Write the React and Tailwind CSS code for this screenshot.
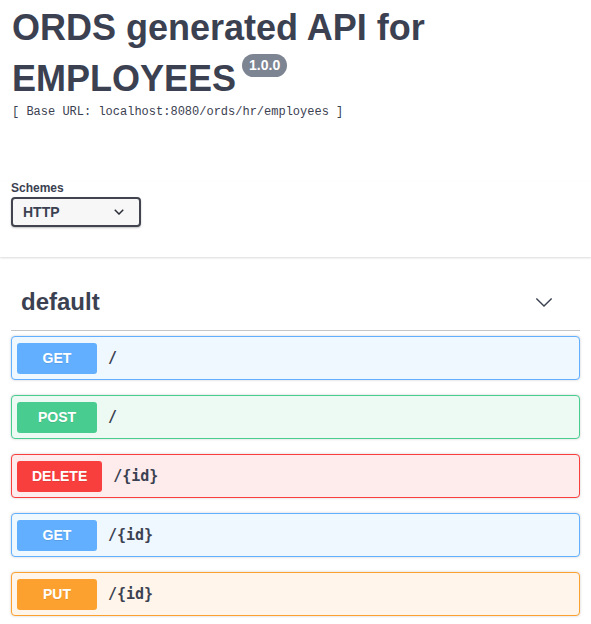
import React from "react";

const ops = [
  { method: "GET", path: "/", badge: "bg-[#61affe]", block: "bg-[#eff7ff] border-[#61affe]" },
  { method: "POST", path: "/", badge: "bg-[#49cc90]", block: "bg-[#edfaf4] border-[#49cc90]" },
  { method: "DELETE", path: "/{id}", badge: "bg-[#f93e3e]", block: "bg-[#feebeb] border-[#f93e3e]" },
  { method: "GET", path: "/{id}", badge: "bg-[#61affe]", block: "bg-[#eff7ff] border-[#61affe]" },
  { method: "PUT", path: "/{id}", badge: "bg-[#fca130]", block: "bg-[#fff5ea] border-[#fca130]" },
];

function Chevron({ className, width = 1.6 }) {
  return (
    <svg viewBox="0 0 20 12" className={className} fill="none" stroke="currentColor">
      <path d="M1.5 1.5 L10 10 L18.5 1.5" strokeWidth={width} />
    </svg>
  );
}

export default function App() {
  return (
    <div className="min-h-screen bg-white text-[#3b4151] font-['Liberation_Sans',Arial,sans-serif]">
      {/* Info */}
      <div className="px-[12px]">
        <h2 className="text-[36px] leading-[51px] font-bold pt-[2px]">
          ORDS generated API for EMPLOYEES
          <span className="relative top-[-16px] ml-[6px] inline-block align-middle rounded-[12px] bg-[#7d8492] px-[7px] h-[23px] leading-[23px] text-[14px] font-bold text-white">
            1.0.0
          </span>
        </h2>
        <p className="mt-[1px] text-[12px] leading-[14px] font-['Liberation_Mono',monospace]">
          [ Base URL: localhost:8080/ords/hr/employees ]
        </p>
      </div>

      {/* Schemes */}
      <div className="mt-[62px] pb-[30px] px-[11px] shadow-[0_1px_2px_0_rgba(0,0,0,0.15)]">
        <div className="text-[12px] font-bold leading-[14px]">Schemes</div>
        <div className="mt-[2px] w-[130px] h-[30px] flex items-center justify-between pl-[10px] pr-[15px] border-2 border-[#41444e] rounded-[4px] bg-[#f7f7f7] shadow-[0_1px_2px_0_rgba(0,0,0,0.25)]">
          <span className="text-[14px] font-bold">HTTP</span>
          <Chevron className="w-[10px] h-[6px] text-[#2b2f38]" width={3} />
        </div>
      </div>

      {/* Tag section */}
      <div className="px-[11px] pt-[27px]">
        <div className="flex items-center justify-between pl-[10px] pr-[27px] pb-[10px] border-b border-[#3b4151]/30">
          <h3 className="text-[24px] font-bold leading-[36px]">default</h3>
          <Chevron className="w-[18px] h-[11px] text-[#3b4151]" />
        </div>

        <div className="mt-[5px] flex flex-col gap-[15px]">
          {ops.map((op, i) => (
            <div
              key={i}
              className={`h-[44px] flex items-center p-[5px] border rounded-[4px] shadow-[0_0_3px_rgba(0,0,0,0.19)] ${op.block}`}
            >
              <span
                className={`min-w-[80px] px-[15px] h-[31px] flex items-center justify-center rounded-[3px] text-white text-[14px] font-bold [text-shadow:0_1px_0_rgba(0,0,0,0.1)] ${op.badge}`}
              >
                {op.method}
              </span>
              <span className="ml-[11px] text-[15px] font-bold font-['DejaVu_Sans_Mono',monospace] text-[#3b4151]">
                {op.path}
              </span>
            </div>
          ))}
        </div>
      </div>
    </div>
  );
}
